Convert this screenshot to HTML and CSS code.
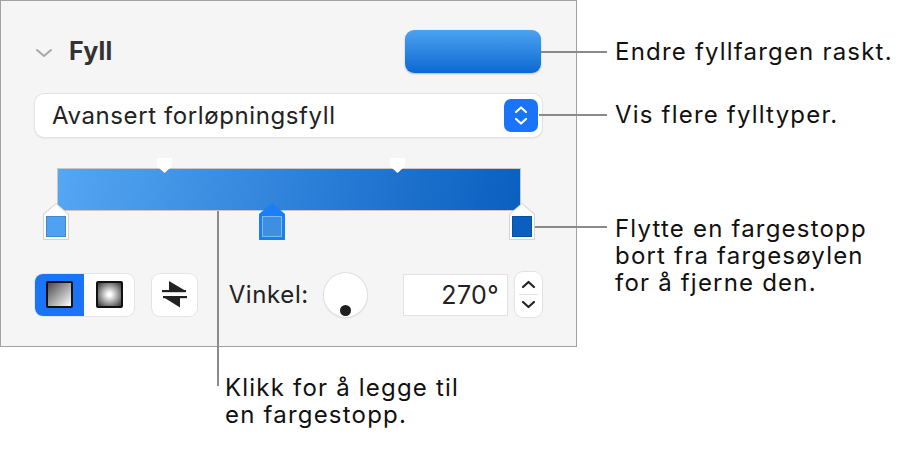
FILE: index.html
```html
<!DOCTYPE html>
<html lang="nb">
<head>
    <meta charset="UTF-8">
    <meta name="viewport" content="width=device-width, initial-scale=1.0">
    <title>Fyll</title>
    <link rel="stylesheet" href="styles.css">
</head>
<body>

    <div class="figure">
        <div class="top">
            <!-- Inspector panel -->
            <div class="panel">
                <div class="header">
                    <svg class="chevron" width="18" height="10" viewBox="0 0 18 10">
                        <path d="M2 2 L9 8 L16 2" fill="none" stroke="#a8a8a8" stroke-width="2" stroke-linecap="round" stroke-linejoin="round"/>
                    </svg>
                    <span class="title">Fyll</span>
                    <div class="swatch"></div>
                </div>

                <div class="popup">
                    <span>Avansert forløpningsfyll</span>
                    <div class="popup-arrows">
                        <svg width="34" height="33" viewBox="0 0 34 33">
                            <path d="M12 13 L17 8.5 L22 13 M12 20 L17 24.5 L22 20" fill="none" stroke="#fff" stroke-width="2.2" stroke-linecap="round" stroke-linejoin="round"/>
                        </svg>
                    </div>
                </div>

                <div class="gradient-editor">
                    <div class="bar"></div>
                    <span class="mid-handle" style="left: 122px"></span>
                    <span class="mid-handle" style="left: 355px"></span>
                    <span class="stop" style="left: 8px"><i class="chip light"></i></span>
                    <span class="stop selected" style="left: 224px"><i class="chip"></i></span>
                    <span class="stop" style="left: 474px"><i class="chip dark"></i></span>
                </div>

                <div class="controls">
                    <div class="segmented">
                        <div class="segment active"><i class="fill-icon linear"></i></div>
                        <div class="segment"><i class="fill-icon radial"></i></div>
                    </div>
                    <div class="swap">
                        <svg width="45" height="42" viewBox="0 0 45 42">
                            <rect x="10" y="16" width="24" height="2.2" fill="#222"/>
                            <path d="M17 7 L17 16.5 L33 16.5 Z" fill="#222"/>
                            <rect x="11" y="22" width="24" height="2.2" fill="#222"/>
                            <path d="M28 33.5 L28 23.5 L12 23.5 Z" fill="#222"/>
                        </svg>
                    </div>
                    <span class="label">Vinkel:</span>
                    <div class="dial"><i class="dial-dot"></i></div>
                    <div class="number">270°</div>
                    <div class="stepper">
                        <svg width="27" height="45" viewBox="0 0 27 45">
                            <path d="M8 15 L13.5 10 L19 15 M8 30 L13.5 35 L19 30" fill="none" stroke="#222" stroke-width="2.2" stroke-linecap="round" stroke-linejoin="round"/>
                            <line x1="4" y1="22.5" x2="23" y2="22.5" stroke="#e2e2e2" stroke-width="1"/>
                        </svg>
                    </div>
                </div>
            </div>

            <!-- Callout texts on the right -->
            <div class="notes">
                <p class="note first">Endre fyllfargen raskt.</p>
                <p class="note second">Vis flere fylltyper.</p>
                <p class="note third">Flytte en fargestopp<br>bort fra fargesøylen<br>for å fjerne den.</p>
            </div>
        </div>

        <p class="note bottom">Klikk for å legge til<br>en fargestopp.</p>

        <!-- leader lines -->
        <span class="leader h" style="top: 51px; left: 541px; width: 66px"></span>
        <span class="leader h" style="top: 114px; left: 539px; width: 68px"></span>
        <span class="leader h" style="top: 226px; left: 535px; width: 72px"></span>
        <span class="leader v" style="left: 217px; top: 211px; height: 175px"></span>
    </div>

</body>
</html>
```

FILE: styles.css
```css
body {
    margin: 0;
    background-color: #fff;
    font-family: Inter, "Noto Sans", sans-serif;
    color: #1d1d1d;
}

.figure {
    position: relative;
    width: 902px;
    height: 449px;
}

.top {
    display: flex;
}

.panel {
    box-sizing: border-box;
    width: 577px;
    height: 347px;
    border: 1px solid #a2a2a2;
    background-color: #f5f5f5;
    padding: 29px 34px 0 34px;
}

.header {
    display: flex;
    align-items: center;
    height: 43px;
}

.chevron {
    margin-top: 2px;
}

.title {
    margin-left: 16px;
    margin-top: -2px;
    font-size: 25px;
    font-weight: 700;
    letter-spacing: 0.3px;
    color: #333;
}

.swatch {
    margin-left: auto;
    margin-right: 1px;
    width: 136px;
    height: 43px;
    border-radius: 9px;
    background: linear-gradient(to bottom, #4da2f0, #0c69d2);
    box-shadow: 0 1px 2px rgba(0, 0, 0, 0.25);
}

.popup {
    display: flex;
    align-items: center;
    margin-top: 21px;
    height: 43px;
    background-color: #fff;
    border-radius: 9px;
    box-shadow: 0 0 0 1px #e3e3e3, 0 1px 2px rgba(0, 0, 0, 0.15);
    padding-left: 17px;
    font-size: 24px;
    letter-spacing: 0.6px;
    color: #222;
}

.popup-arrows {
    margin-left: auto;
    margin-right: 4px;
    width: 34px;
    height: 33px;
    border-radius: 7px;
    background-color: #1a74f7;
}

.popup-arrows svg {
    display: block;
}

.gradient-editor {
    position: relative;
    margin-top: 21px;
    height: 82px;
}

.bar {
    position: absolute;
    left: 22px;
    top: 10px;
    box-sizing: border-box;
    width: 464px;
    height: 43px;
    border: 1px solid #c8c8c8;
    background: linear-gradient(100deg, #55a6f3, #0a5fc0);
}

.mid-handle {
    position: absolute;
    top: 0;
    width: 15px;
    height: 15px;
    background-color: #fff;
    clip-path: polygon(0 0, 100% 0, 100% 55%, 50% 100%, 0 55%);
    filter: drop-shadow(0 0 1px rgba(0, 0, 0, 0.3));
}

.stop {
    position: absolute;
    top: 45px;
    width: 26px;
    height: 37px;
    background-color: #d4d4d4;
    clip-path: polygon(50% 0, 100% 30%, 100% 100%, 0 100%, 0 30%);
}

.stop::before {
    content: "";
    position: absolute;
    left: 1px;
    top: 1px;
    right: 1px;
    bottom: 1px;
    background-color: #fff;
    clip-path: polygon(50% 0, 100% 30%, 100% 100%, 0 100%, 0 30%);
}

.stop.selected {
    background-color: #1a7ff7;
}

.stop.selected::before {
    background-color: #1a7ff7;
}

.chip {
    position: absolute;
    left: 3px;
    bottom: 3px;
    box-sizing: border-box;
    width: 20px;
    height: 21px;
    border: 1px solid rgba(0, 0, 0, 0.15);
    background-color: #3d8fe2;
}

.selected .chip {
    border-color: rgba(255, 255, 255, 0.35);
}

.chip.light {
    background-color: #4fa2f2;
}

.chip.dark {
    background-color: #0a5fc0;
}

.controls {
    display: flex;
    align-items: center;
    margin-top: 32px;
    height: 45px;
}

.segmented {
    display: flex;
    width: 100px;
    height: 42px;
    border-radius: 8px;
    overflow: hidden;
    background-color: #fff;
    box-shadow: 0 0 0 1px #e4e4e4;
}

.segment {
    flex: 1;
    display: flex;
    align-items: center;
    justify-content: center;
}

.segment.active {
    background-color: #1a74f7;
}

.fill-icon {
    box-sizing: border-box;
    width: 27px;
    height: 27px;
    border: 2px solid #111;
    border-radius: 2px;
}

.fill-icon.linear {
    background: linear-gradient(135deg, #4a4a4a, #fff);
}

.fill-icon.radial {
    background: radial-gradient(circle, #fff 10%, #333 100%);
}

.swap {
    margin-left: 18px;
    width: 45px;
    height: 42px;
    border-radius: 8px;
    background-color: #fff;
    box-shadow: 0 0 0 1px #e4e4e4;
}

.swap svg {
    display: block;
}

.label {
    margin-left: 32px;
    font-size: 24px;
    letter-spacing: 0.6px;
    color: #222;
}

.dial {
    position: relative;
    margin-left: 15px;
    width: 44px;
    height: 44px;
    border-radius: 50%;
    background-color: #fff;
    box-shadow: 0 0 0 1px #e0e0e0, 0 1px 2px rgba(0, 0, 0, 0.15);
}

.dial-dot {
    position: absolute;
    left: 16px;
    top: 32px;
    width: 11px;
    height: 11px;
    border-radius: 50%;
    background-color: #1e1e1e;
}

.number {
    box-sizing: border-box;
    margin-left: 37px;
    width: 104px;
    height: 40px;
    line-height: 40px;
    padding-right: 8px;
    text-align: right;
    background-color: #fff;
    box-shadow: 0 0 0 1px #e2e2e2;
    font-size: 25px;
    letter-spacing: 0.4px;
    color: #222;
}

.stepper {
    margin-left: 8px;
    width: 27px;
    height: 45px;
    border-radius: 8px;
    background-color: #fff;
    box-shadow: 0 0 0 1px #e2e2e2;
}

.stepper svg {
    display: block;
}

.notes {
    display: flex;
    flex-direction: column;
    padding-left: 38px;
}

.note {
    margin: 0;
    font-size: 24px;
    letter-spacing: 1.2px;
    line-height: 27px;
    color: #111;
}

.first {
    margin-top: 38px;
}

.second {
    margin-top: 36px;
}

.third {
    margin-top: 87px;
}

.bottom {
    margin-left: 225px;
    margin-top: 27px;
}

.leader {
    position: absolute;
    background-color: #8a8a8a;
}

.leader.h {
    height: 2px;
}

.leader.v {
    width: 2px;
}
```
